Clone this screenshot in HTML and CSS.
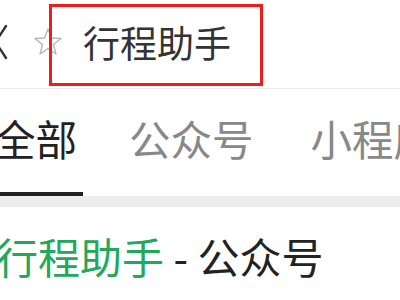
FILE: index.html
```html
<!DOCTYPE html>
<html lang="zh">
<head>
<meta charset="utf-8">
<link rel="stylesheet" href="styles.css">
</head>
<body>
<div class="page">
  <header class="topbar">
    <svg class="icon-close" width="10" height="44" viewBox="0 0 10 44">
      <path d="M6 4 L-15 36 M6 36 L-15 4" stroke="#333" stroke-width="2.4" fill="none" stroke-linecap="round"/>
    </svg>
    <svg class="icon-star" width="30" height="30" viewBox="0 0 30 30">
      <path d="M15 2 L18.5 11 L28 11.5 L20.5 17.5 L23 27 L15 21.5 L7 27 L9.5 17.5 L2 11.5 L11.5 11 Z" stroke="#b4b4b4" stroke-width="1.3" fill="none" stroke-linejoin="round"/>
    </svg>
    <span class="title">行程助手</span>
    <div class="highlight"></div>
  </header>
  <nav class="tabs">
    <span class="tab active">全部</span>
    <span class="tab second">公众号</span>
    <span class="tab">小程序</span>
  </nav>
  <div class="divider"></div>
  <div class="result">
    <span class="name">行程助手</span><span class="type"> - 公众号</span>
  </div>
</div>
</body>
</html>
```
FILE: styles.css
```css
html, body {
  margin: 0;
  padding: 0;
  background: #fff;
}
body {
  font-family: "Noto Sans CJK SC", "Noto Sans", sans-serif;
  width: 400px;
  height: 300px;
  overflow: hidden;
}
.page {
  width: 400px;
}
.topbar {
  position: relative;
  height: 88px;
  display: flex;
  align-items: center;
  border-bottom: 1px solid #ececec;
}
.icon-close {
  flex: none;
}
.icon-star {
  flex: none;
  margin-left: 23px;
  margin-top: -4px;
}
.title {
  margin-left: 20px;
  font-size: 37px;
  line-height: 40px;
  color: #333;
  margin-top: -5px;
}
.highlight {
  position: absolute;
  left: 49px;
  top: 4px;
  width: 208px;
  height: 76px;
  border: 3px solid #f01c1c;
}
.tabs {
  display: flex;
  gap: 46px;
  margin-left: -8px;
  height: 107px;
  white-space: nowrap;
}
.tab {
  font-size: 41.5px;
  line-height: 44px;
  color: #888;
  height: 107px;
  padding-top: 27px;
  box-sizing: border-box;
}
.tab.active {
  color: #222;
  border-bottom: 4px solid #222;
  padding-left: 2px;
  padding-right: 6px;
}
.tab.second {
  margin-right: 11px;
}
.divider {
  height: 11px;
  background: #ededed;
}
.result {
  padding-top: 26px;
  margin-left: -4px;
  font-size: 42px;
  line-height: 46px;
  white-space: nowrap;
}
.name {
  color: #22a85a;
}
.type {
  color: #222;
}
```
